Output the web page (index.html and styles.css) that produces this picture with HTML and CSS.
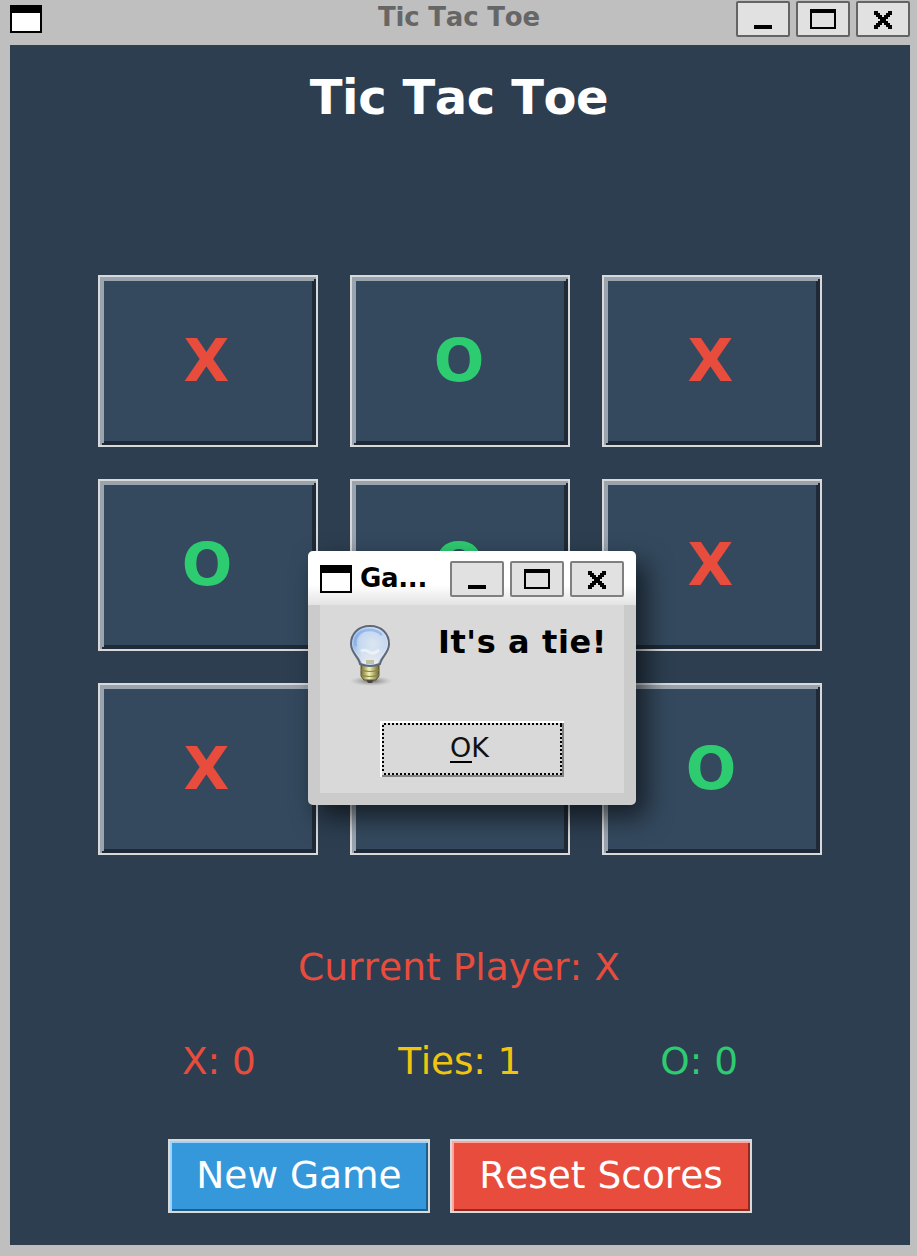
FILE: index.html
```
<!DOCTYPE html>
<html lang="en">
<head>
<meta charset="utf-8">
<title>Tic Tac Toe</title>
<link rel="stylesheet" href="styles.css">
</head>
<body>
<svg class="defs" aria-hidden="true">
  <symbol id="win" viewBox="0 0 16 14"><path d="M0 0h16v14H0z" fill="#000"/><path d="M1 4h14v9H1z" fill="#fff"/></symbol>
  <symbol id="min" viewBox="0 0 27 18"><path d="M9 12h9v2H9z"/></symbol>
  <symbol id="max" viewBox="0 0 27 18"><path fill-rule="evenodd" d="M7 4h13v10H7zM8 6v7h11V6z"/></symbol>
  <symbol id="close" viewBox="0 0 27 18"><path d="M9 5h2v1h1v1h1v1h1V7h1V6h1V5h2v2h-1v1h-1v1h-1v1h1v1h1v1h1v2h-2v-1h-1v-1h-1v-1h-1v1h-1v1h-1v1H9v-2h1v-1h1v-1h1V9h-1V8h-1V7H9z"/></symbol>
</svg>
<div class="window">
  <header class="titlebar">
    <svg class="win-icon"><use href="#win"/></svg>
    <span class="caption">Tic Tac Toe</span>
    <div class="controls">
      <button class="ctl"><svg><use href="#min"/></svg></button>
      <button class="ctl"><svg><use href="#max"/></svg></button>
      <button class="ctl"><svg><use href="#close"/></svg></button>
    </div>
  </header>
  <main class="client">
    <h1 class="heading">Tic Tac Toe</h1>
    <div class="board">
      <button class="cell x">X</button><button class="cell o">O</button><button class="cell x">X</button>
      <button class="cell o">O</button><button class="cell o">O</button><button class="cell x">X</button>
      <button class="cell x">X</button><button class="cell"></button><button class="cell o">O</button>
    </div>
    <p class="status">Current Player: X</p>
    <div class="scores">
      <span class="score-x">X: 0</span><span class="score-t">Ties: 1</span><span class="score-o">O: 0</span>
    </div>
    <div class="actions">
      <button class="action new">New Game</button>
      <button class="action reset">Reset Scores</button>
    </div>
  </main>
</div>
<div class="dialog" role="dialog">
  <header class="dialog-bar">
    <svg class="win-icon"><use href="#win"/></svg>
    <span class="dialog-caption">Ga...</span>
    <div class="controls">
      <button class="ctl"><svg><use href="#min"/></svg></button>
      <button class="ctl"><svg><use href="#max"/></svg></button>
      <button class="ctl"><svg><use href="#close"/></svg></button>
    </div>
  </header>
  <div class="dialog-body">
    <div class="message">
      <svg class="bulb" viewBox="0 0 44 64">
        <defs>
          <radialGradient id="glass" cx=".58" cy=".45" r=".62"><stop offset="0" stop-color="#dce6f1"/><stop offset=".6" stop-color="#c3d8f0"/><stop offset="1" stop-color="#78a5e4"/></radialGradient>
          <linearGradient id="low" x1="0" y1="0" x2="0" y2="1"><stop offset="0" stop-color="#eee" stop-opacity="0"/><stop offset="1" stop-color="#f1f1ef"/></linearGradient>
          <linearGradient id="brass"><stop offset="0" stop-color="#77722f"/><stop offset=".45" stop-color="#f4f3b4"/><stop offset="1" stop-color="#6b662b"/></linearGradient>
          <radialGradient id="shade"><stop offset="0" stop-color="#333" stop-opacity=".75"/><stop offset=".45" stop-color="#666" stop-opacity=".4"/><stop offset="1" stop-color="#888" stop-opacity="0"/></radialGradient>
        </defs>
        <ellipse cx="23" cy="58" rx="21" ry="5" fill="url(#shade)"/>
        <path d="M18 56h8l-2 4h-4z" fill="#444"/>
        <path d="M13 41h18v12l-3 4H16l-3-4z" fill="url(#brass)" stroke="#5b5730"/>
        <path d="M13 47q9 3 18 0M13 52q9 3 18 0" fill="none" stroke="#8b8648" stroke-width="1.2"/>
        <path d="M22 3C10 3 3 11 3 21c0 9 8 13 9 20q10 4 20 0c1-7 9-11 9-20C41 11 34 3 22 3z" fill="url(#glass)" stroke="#606779" stroke-width="2"/>
        <path d="M5 24c2 7 8 11 9 16q8 3 16 0c1-5 7-9 9-16z" fill="url(#low)"/>
        <path d="M22 4.500C11 4.500 4.500 12 4.500 21c0 8 8 12 9 18.500q8.500 3 17 0c1-6.500 9-10.500 9-18.500C39.500 12 33 4.500 22 4.500z" fill="none" stroke="#edf3fb" stroke-width="1" opacity=".4"/>
        <path d="M8 23C5 13 13 7 22 7c6 0 9 2 12 5" fill="none" stroke="#6d9fe8" stroke-width="2.500" opacity=".5"/>
        <path d="M13 28q4-2 8 1t10-2" fill="none" stroke="#fff" stroke-width="3" opacity=".5"/>
        <path d="M18 41v-4h8v4" fill="#b9b88f" opacity=".8"/>
      </svg>
      <span class="message-text">It's a tie!</span>
    </div>
    <button class="ok"><span class="ok-label">OK</span></button>
  </div>
</div>
</body>
</html>
```
FILE: styles.css
```
* { box-sizing: border-box; margin: 0; padding: 0; }

body {
  width: 917px;
  height: 1256px;
  overflow: hidden;
  position: relative;
  background: #bfbfbf;
  font-family: "DejaVu Sans", sans-serif;
  font-kerning: none;
}

button { border: 0; font-family: inherit; font-kerning: none; }
svg { display: block; shape-rendering: crispEdges; }
.defs { position: absolute; width: 0; height: 0; }

.window { padding: 0 7px 11px 10px; }

.titlebar {
  height: 45px;
  display: flex;
  align-items: flex-start;
}
.win-icon { width: 32px; height: 28px; flex: none; }
.titlebar .win-icon { margin-top: 5px; }
.caption {
  flex: 1;
  margin-left: 336px;
  line-height: 35px;
  font-size: 26px;
  font-weight: bold;
  letter-spacing: -.2px;
  color: #666;
}
.controls { display: flex; gap: 6px; }
.titlebar .controls { margin-top: 1px; }
.ctl {
  width: 54px;
  height: 36px;
  border: 2px solid #646464;
  border-radius: 2px;
  background: #e1e1e1;
}
.ctl svg { width: 54px; height: 36px; margin: -2px; }

.client {
  height: 1200px;
  background: #2c3e50;
  display: flex;
  flex-direction: column;
  align-items: center;
}
.heading {
  margin-top: 22px;
  height: 60px;
  line-height: 60px;
  padding-right: 2px;
  font-size: 48px;
  letter-spacing: -.4px;
  color: #fff;
}
.board {
  margin-top: 148px;
  display: grid;
  grid-template-columns: repeat(3, 220px);
  grid-auto-rows: 172px;
  gap: 32px;
}
.cell {
  border: 2px solid #d9d9d9;
  background: #34495e;
  padding: 0 3px 2px 0;
  font-size: 59.5px;
  font-weight: bold;
  box-shadow: inset 2px 2px #9aa4af, inset -2px -2px #1e2a38, inset 4px 4px #9aa4af, inset -4px -4px #1e2a38;
}
.cell.o { padding-right: 2px; }
.x, .score-x, .status { color: #e74c3c; }
.o, .score-o { color: #2ecc71; }
.score-t { color: #f1c40f; }

.status {
  margin-top: 87px;
  padding-right: 2px;
  height: 50px;
  line-height: 50px;
  font-size: 37.6px;
}
.scores {
  width: 556px;
  margin-top: 44px;
  height: 50px;
  line-height: 50px;
  font-size: 37.4px;
  display: flex;
  justify-content: space-between;
}
.score-t { padding-left: 3px; letter-spacing: -.15px; }
.actions { margin-top: 53px; display: flex; gap: 20px; }
.action {
  width: 262px;
  height: 74px;
  border: 2px solid #d9d9d9;
  padding-bottom: 2px;
  font-size: 37.5px;
  color: #fff;
}
.new { background: #3498db; box-shadow: inset 2px 2px #9ad4ff, inset -2px -2px #1d5f8b; }
.reset { width: 302px; background: #e74c3c; box-shadow: inset 2px 2px #ffa59d, inset -2px -2px #922a20; }

.dialog {
  position: absolute;
  left: 308px;
  top: 551px;
  width: 328px;
  height: 254px;
  padding: 0 12px 12px;
  border-radius: 5px;
  background: linear-gradient(#fff 0, #fff 34px, #e3e3e3 54px, #cbcbcb 54px);
  box-shadow: 10px 12px 26px rgba(0, 0, 0, .6);
}
.dialog-bar { height: 54px; display: flex; }
.dialog-bar .win-icon { margin-top: 14px; }
.dialog-caption {
  flex: 1;
  margin-left: 8px;
  line-height: 54px;
  font-size: 26px;
  font-weight: bold;
  letter-spacing: -.3px;
}
.dialog-bar .controls { margin-top: 10px; }
.dialog-bar .ctl { border-color: #7f7f7f; }
.dialog-body {
  height: 188px;
  background: #d9d9d9;
  display: flex;
  flex-direction: column;
  align-items: center;
}
.message {
  width: 304px;
  height: 116px;
  padding: 18px 17px 0 28px;
  display: flex;
  justify-content: space-between;
}
.bulb { width: 44px; height: 64px; shape-rendering: auto; }
.message-text { line-height: 38px; font-size: 32px; font-weight: bold; letter-spacing: .6px; }
.ok {
  width: 184px;
  height: 56px;
  padding: 0 5px 2px 0;
  background:
    repeating-linear-gradient(90deg, #d9d9d9 0 2px, #000 2px 4px) 2px 2px / 180px 2px no-repeat,
    repeating-linear-gradient(90deg, #d9d9d9 0 2px, #000 2px 4px) 2px 52px / 180px 2px no-repeat,
    repeating-linear-gradient(#000 0 2px, #d9d9d9 2px 4px) 2px 4px / 2px 48px no-repeat,
    repeating-linear-gradient(#000 0 2px, #d9d9d9 2px 4px) 180px 4px / 2px 48px no-repeat,
    #d9d9d9;
  box-shadow: inset 2px 2px #fff, inset -2px -2px #828282;
  font-size: 27px;
}
/* the bar under the first letter marks the keyboard mnemonic */
.ok-label {
  display: inline-block;
  line-height: 32px;
  color: #111;
  background: linear-gradient(#000, #000) 0 29px / 22px 2px no-repeat;
}
```
